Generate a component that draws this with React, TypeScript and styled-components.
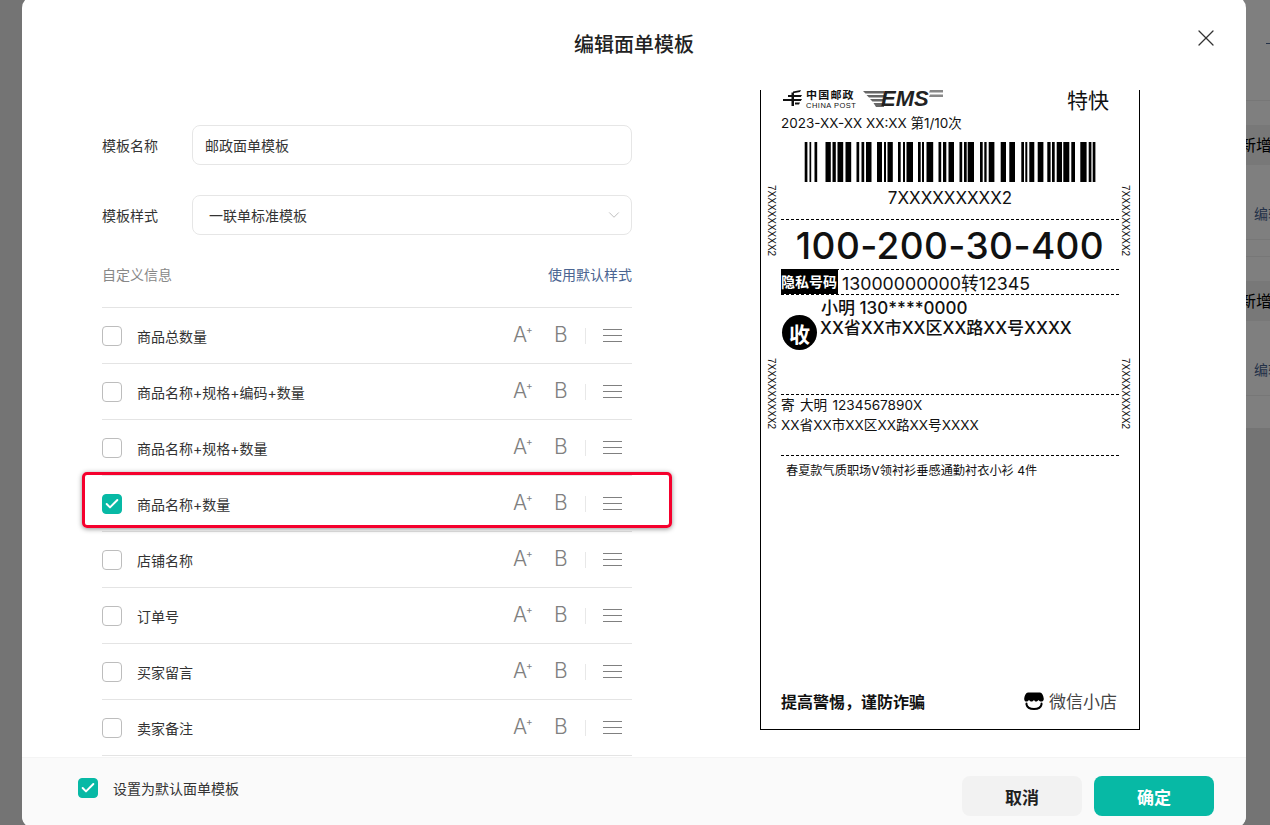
import React, { FC } from 'react';
import styled, { createGlobalStyle } from 'styled-components';
import { Check, ChevronDown, X } from 'lucide-react';

const FONT = '"Inter", "Noto Sans CJK SC", sans-serif';
const TEAL = '#07b9a5';
const DASH = '1px dashed #000';

const GlobalStyle = createGlobalStyle`
  html, body {
    margin: 0;
    height: 100%;
    overflow: hidden;
    font-family: ${FONT};
    color: #333;
  }
  #root { height: 100%; }
`;

/* page behind the dialog */
const Page = styled.div`
  position: relative;
  height: 825px;
  overflow: hidden;
  background: #e9e9e9;
  padding-left: 40px;
`;

const Panel = styled.div`
  height: 428px;
  background: #fff;
`;

const PanelTop = styled.div`
  height: 100px;
  border-bottom: 1px solid #eee;
  margin-bottom: 24px;
  display: flex;
  justify-content: flex-end;
`;

const PanelDash = styled.span`
  width: 4px;
  height: 1px;
  margin-top: 43px;
  background: #4a6491;
`;

const Band = styled.div`
  height: 40px;
  background: #f0f0f0;
  padding-left: 1200px;
  font-size: 16px;
  line-height: 40px;
  color: #000;
  white-space: nowrap;
`;

const EditRow = styled.div`
  height: 74px;
  padding-left: 1214px;
  border-bottom: 1px solid #eee;
  font-size: 14px;
  line-height: 98px;
  color: #4a6491;
  white-space: nowrap;
`;

const SectionGap = styled.div`
  height: 24px;
  margin-top: 16px;
  border-top: 1px solid #eee;
`;

const Mask = styled.div`
  position: absolute;
  inset: 0;
  background: rgba(0, 0, 0, 0.5);
`;

/* dialog */
const Modal = styled.div`
  position: absolute;
  left: 22px;
  top: -4px;
  width: 1224px;
  height: 832px;
  display: flex;
  flex-direction: column;
  background: #fff;
  border-radius: 12px;
  overflow: hidden;
`;

const Header = styled.div`
  height: 94px;
  flex: none;
  box-sizing: border-box;
  padding-top: 35px;
  text-align: center;
  font-size: 20px;
  line-height: 28px;
  font-weight: 500;
  color: #222;
`;

const CloseButton = styled.button`
  position: absolute;
  right: 26px;
  top: 28px;
  padding: 0;
  display: flex;
  border: 0;
  background: none;
  color: #333;
`;

const Body = styled.div`
  flex: 1;
  min-height: 0;
  display: flex;
  gap: 128px;
  padding-left: 80px;
  overflow: hidden;
`;

const FormColumn = styled.div`
  width: 530px;
  flex: none;
  padding-top: 35px;
`;

const Field = styled.div`
  display: flex;
  align-items: center;
  height: 40px;
  margin-bottom: 30px;
  font-size: 14px;
`;

const FieldLabel = styled.label`
  width: 90px;
  flex: none;
  color: #333;
`;

const TextInput = styled.input`
  flex: 1;
  height: 40px;
  box-sizing: border-box;
  padding: 0 12px;
  border: 1px solid #e6e6e6;
  border-radius: 8px;
  outline: none;
  font: 14px ${FONT};
  color: #333;
`;

const SelectBox = styled.div`
  flex: 1;
  height: 40px;
  box-sizing: border-box;
  padding: 0 8px 0 16px;
  display: flex;
  align-items: center;
  justify-content: space-between;
  border: 1px solid #e6e6e6;
  border-radius: 8px;
  color: #333;
`;

const CustomHead = styled.div`
  display: flex;
  justify-content: space-between;
  align-items: center;
  height: 20px;
  margin-top: 1px;
  padding-bottom: 22px;
  border-bottom: 1px solid #e4e4e4;
  font-size: 14px;
  line-height: 20px;
  color: #888;
`;

const DefaultLink = styled.a`
  color: #4a6491;
`;

const OptionRow = styled.div<{ $marked?: boolean }>`
  position: relative;
  height: 56px;
  box-sizing: border-box;
  display: flex;
  align-items: center;
  border-bottom: 1px solid #e4e4e4;
  font-size: 14px;

  ${(p) =>
    p.$marked &&
    `&::after {
      content: '';
      position: absolute;
      left: -20px;
      right: -40px;
      top: -4px;
      bottom: 3px;
      border: 3px solid #f5002d;
      border-radius: 5px;
      box-shadow: 0 1px 5px rgba(0, 0, 0, 0.45);
    }`}
`;

const Box = styled.span<{ $on?: boolean }>`
  width: 20px;
  height: 20px;
  flex: none;
  box-sizing: border-box;
  display: flex;
  align-items: center;
  justify-content: center;
  border-radius: 4px;
  border: 1px solid ${(p) => (p.$on ? TEAL : '#bdbdbd')};
  background: ${(p) => (p.$on ? TEAL : '#fff')};
  color: #fff;
`;

const OptionName = styled.span`
  flex: 1;
  margin-left: 15px;
  color: #333;
`;

const ToolGroup = styled.div`
  display: flex;
  align-items: center;
  width: 118px;
  height: 20px;
  color: #808080;
`;

const ToolGlyph = styled.span`
  position: relative;
  top: -1px;
  font-family: "Inter", sans-serif;
  font-size: 21px;
  font-weight: 300;
  line-height: 20px;
`;

const GrowGlyph = styled(ToolGlyph)`
  width: 41px;
  margin-left: -1px;
  margin-right: 1px;
`;

const PlusMark = styled.sup`
  position: absolute;
  left: 13px;
  top: -1px;
  font-size: 10px;
  font-weight: 400;
  line-height: 10px;
  vertical-align: baseline;
`;

const BoldGlyph = styled(ToolGlyph)`
  width: 30px;
  margin-left: -1px;
  margin-right: 1px;
`;

const ToolDivider = styled.i`
  width: 1px;
  height: 16px;
  background: #e8e8e8;
  margin-right: 17px;
`;

const Burger = styled.span`
  width: 19px;
  height: 13px;
  border-top: 1px solid #808080;
  border-bottom: 1px solid #808080;
  box-sizing: border-box;
  display: flex;
  align-items: center;

  &::before {
    content: '';
    flex: 1;
    height: 1px;
    background: #808080;
  }
`;

/* waybill preview */
const Waybill = styled.div`
  position: relative;
  width: 380px;
  height: 640px;
  flex: none;
  box-sizing: border-box;
  display: flex;
  flex-direction: column;
  padding: 0 20px 17px;
  border: 1px solid #000;
  border-top: 0;
  color: #111;
`;

const SideCode = styled.span<{ $side: 'left' | 'right'; $top: number }>`
  position: absolute;
  ${(p) => p.$side}: ${(p) => (p.$side === 'left' ? 5 : 8)}px;
  top: ${(p) => p.$top}px;
  writing-mode: vertical-rl;
  font-family: "Liberation Sans", sans-serif;
  font-size: 10px;
  line-height: 11px;
`;

const BillHead = styled.div`
  height: 23px;
  display: flex;
  align-items: flex-start;
  padding-left: 2px;
`;

const PostName = styled.div`
  margin-left: 3px;
  display: flex;
  flex-direction: column;
  width: 57px;
`;

const PostCn = styled.span`
  font-size: 11px;
  line-height: 11px;
  font-weight: 700;
  letter-spacing: 1.2px;
`;

const PostEn = styled.span`
  font-family: "Liberation Sans", sans-serif;
  font-size: 7.5px;
  line-height: 7px;
  letter-spacing: 0.5px;
  margin-top: 1px;
  white-space: nowrap;
`;

const EmsMark = styled.div`
  display: flex;
  align-items: flex-start;
  height: 18px;
`;

const EmsText = styled.span`
  font-family: "Liberation Sans", sans-serif;
  font-style: italic;
  font-weight: 700;
  font-size: 22px;
  line-height: 18px;
  margin-left: -3px;
  color: #222;
`;

const SpeedTag = styled.span`
  margin-left: auto;
  margin-right: 10px;
  font-size: 21px;
  line-height: 22px;
`;

const DateLine = styled.div`
  font-size: 13.5px;
  line-height: 20px;
  white-space: nowrap;
`;

const BarcodeWrap = styled.div`
  margin: 9px 0 0 23px;
  height: 40px;
  display: flex;
`;

const CodeLine = styled.div`
  margin-top: 6px;
  height: 32px;
  box-sizing: border-box;
  border-bottom: ${DASH};
  text-align: center;
  font-size: 17px;
  line-height: 20px;
`;

const TrackNo = styled.div`
  height: 50px;
  box-sizing: border-box;
  border-bottom: ${DASH};
  text-align: center;
  font-size: 37px;
  line-height: 52px;
  font-weight: 500;
  letter-spacing: 0.4px;
  white-space: nowrap;
`;

const PhoneRow = styled.div`
  height: 25px;
  box-sizing: border-box;
  display: flex;
  align-items: center;
  border-bottom: ${DASH};
  font-size: 17.75px;
  white-space: nowrap;
`;

const PrivacyTag = styled.span`
  width: 57px;
  height: 25px;
  margin: -1px 4px 0 0;
  background: #000;
  color: #fff;
  font-size: 14px;
  font-weight: 700;
  line-height: 26px;
  white-space: nowrap;
  overflow: hidden;
`;

const Receiver = styled.div`
  height: 100px;
  box-sizing: border-box;
  padding-top: 3px;
  border-bottom: ${DASH};
  display: flex;
`;

const ReceiverBadge = styled.span`
  width: 35px;
  height: 35px;
  margin: 17px 3px 0 1px;
  flex: none;
  display: flex;
  align-items: center;
  justify-content: center;
  border-radius: 50%;
  background: #000;
  color: #fff;
  font-size: 21px;
  font-weight: 700;
`;

const ReceiverText = styled.div`
  font-size: 17px;
  font-weight: 500;
  line-height: 20px;
  white-space: nowrap;
`;

const ReceiverName = styled.div`
  padding-left: 1px;
`;

const Sender = styled.div`
  height: 61px;
  box-sizing: border-box;
  border-bottom: ${DASH};
  font-size: 13.6px;
  line-height: 20px;
  word-spacing: 1.5px;
`;

const Goods = styled.div`
  padding: 5px 0 0 5px;
  font-size: 12.2px;
  line-height: 20px;
  white-space: nowrap;
`;

const BillFoot = styled.div`
  margin-top: auto;
  height: 20px;
  display: flex;
  align-items: center;
  justify-content: space-between;
`;

const Warning = styled.span`
  font-size: 16px;
  font-weight: 700;
  line-height: 20px;
  white-space: nowrap;
`;

const ShopMark = styled.span`
  display: flex;
  align-items: center;
  gap: 5px;
  margin-right: 2px;
  font-size: 17px;
  line-height: 20px;
  color: #444;
`;

/* dialog footer */
const Footer = styled.div`
  height: 71px;
  flex: none;
  box-sizing: border-box;
  padding: 18px 32px 0 56px;
  display: flex;
  align-items: flex-start;
  background: #fafafa;
  border-top: 1px solid #f4f4f4;
`;

const DefaultCheck = styled.label`
  display: flex;
  align-items: center;
  gap: 15px;
  margin-top: 2px;
  font-size: 14px;
  color: #333;
  flex: 1;
`;

const ActionButton = styled.button<{ $primary?: boolean }>`
  width: 120px;
  height: 40px;
  margin-left: 12px;
  border: 0;
  border-radius: 8px;
  background: ${(p) => (p.$primary ? TEAL : '#f2f2f2')};
  color: ${(p) => (p.$primary ? '#fff' : '#222')};
  font: 700 17px ${FONT};
`;

const OPTIONS = [
  '商品总数量',
  '商品名称+规格+编码+数量',
  '商品名称+规格+数量',
  '商品名称+数量',
  '店铺名称',
  '订单号',
  '买家留言',
  '卖家备注',
];

// x, width pairs measured from the left edge of the barcode
const BARS: [number, number][] = [
  [0.7, 2.7], [5.5, 1.7], [10.5, 2.7], [21.5, 5.3], [28.5, 3.3], [33.5, 5.7], [41.5, 5.7],
  [52.5, 2.7], [57.5, 2.7], [62, 5.5], [73, 5], [80, 2], [83.5, 5.3], [94, 2.7], [99, 2],
  [102.5, 6.5], [114, 2.7], [118, 2], [122.5, 6.7], [134.5, 2.7], [139, 3.3], [144.5, 5.5],
  [155.5, 2.7], [160, 2.7], [163.7, 6.3], [176, 2.7], [180.3, 2.3], [184.7, 5.7], [196.7, 5.3],
  [205.3, 5.7], [217.3, 2.7], [221.3, 2], [225.3, 5], [233.7, 5.7], [243.3, 3.3], [248, 2.7],
  [252.7, 5.3], [259.3, 6], [267.3, 3.7], [276.3, 6.3], [284.7, 2.7], [288.7, 2.7],
];

const Barcode: FC = () => (
  <svg width="292" height="40" viewBox="0 0 292 40">
    {BARS.map(([x, w]) => (
      <rect key={x} x={x} y="0" width={w} height="40" fill="#000" />
    ))}
  </svg>
);

const PostEmblem: FC = () => (
  <svg width="20" height="17" viewBox="0 0 20 17" fill="#111">
    <path d="M10 1.5l8-1.500-1 2-7 1.300zM5 5h14l-1.200 2H5zM0 9h19l-1.200 2H11v5H8.500v-5H0zM8.500 2.500H11V9H8.500zM12 12.500h5l-1 2h-4z" />
  </svg>
);

const EmsWing: FC = () => (
  <svg width="21" height="18" viewBox="0 0 21 18" fill="#666">
    <path d="M0 1h21v2.500H2.500zM3.500 5H21v2.500H6zM7 9h14v2.500H9.500zM10.500 13H21v4h-8z" />
  </svg>
);

const EmsLines: FC = () => (
  <svg width="14" height="8" viewBox="0 0 14 8" fill="#888">
    <path d="M1 0h13v2.500H0zM1 4.500h13V7H0z" />
  </svg>
);

const ShopIcon: FC = () => (
  <svg width="20" height="20" viewBox="0 0 20 20">
    <path
      d="M4 0.500h12c2 0 3.500 3 3.800 6.500 0 1.600-1.300 2.600-2.700 2.600-1.200 0-2.100-.6-2.600-1.500-.5.900-1.400 1.500-2.500 1.500S10.500 9 10 8.100C9.500 9 8.500 9.600 7.500 9.600S5.500 9 5 8.100C4.400 9 3.600 9.600 2.500 9.600 1.200 9.600.2 8.600.2 7 .5 3.500 2 .5 4 .5z"
      fill="#000"
    />
    <path d="M2.500 11.500v1c1.200 6 13.800 6 15 0v-1" fill="none" stroke="#000" strokeWidth="2" strokeLinecap="round" />
  </svg>
);

const App: FC = () => (
  <>
    <GlobalStyle />
    <Page>
      <Panel>
        <PanelTop>
          <PanelDash />
        </PanelTop>
        <Band>新增</Band>
        <EditRow>编辑</EditRow>
        <SectionGap />
        <Band>新增</Band>
        <EditRow>编辑</EditRow>
      </Panel>
      <Mask />
      <Modal>
        <Header>
          编辑面单模板
          <CloseButton type="button">
            <X size={28} strokeWidth={1.1} />
          </CloseButton>
        </Header>
        <Body>
          <FormColumn>
            <Field>
              <FieldLabel>模板名称</FieldLabel>
              <TextInput readOnly value="邮政面单模板" />
            </Field>
            <Field>
              <FieldLabel>模板样式</FieldLabel>
              <SelectBox>
                一联单标准模板
                <ChevronDown size={18} strokeWidth={1} color="#aaa" />
              </SelectBox>
            </Field>
            <CustomHead>
              自定义信息
              <DefaultLink>使用默认样式</DefaultLink>
            </CustomHead>
            {OPTIONS.map((name) => {
              const on = name === '商品名称+数量';
              return (
                <OptionRow key={name} $marked={on}>
                  <Box $on={on}>{on && <Check size={16} strokeWidth={3} />}</Box>
                  <OptionName>{name}</OptionName>
                  <ToolGroup>
                    <GrowGlyph>
                      A<PlusMark>+</PlusMark>
                    </GrowGlyph>
                    <BoldGlyph>B</BoldGlyph>
                    <ToolDivider />
                    <Burger />
                  </ToolGroup>
                </OptionRow>
              );
            })}
          </FormColumn>
          <Waybill>
            <SideCode $side="left" $top={95}>7XXXXXXXXX2</SideCode>
            <SideCode $side="right" $top={95}>7XXXXXXXXX2</SideCode>
            <SideCode $side="left" $top={268}>7XXXXXXXXX2</SideCode>
            <SideCode $side="right" $top={268}>7XXXXXXXXX2</SideCode>
            <BillHead>
              <PostEmblem />
              <PostName>
                <PostCn>中国邮政</PostCn>
                <PostEn>CHINA POST</PostEn>
              </PostName>
              <EmsMark>
                <EmsWing />
                <EmsText>EMS</EmsText>
                <EmsLines />
              </EmsMark>
              <SpeedTag>特快</SpeedTag>
            </BillHead>
            <DateLine>2023-XX-XX XX:XX 第1/10次</DateLine>
            <BarcodeWrap>
              <Barcode />
            </BarcodeWrap>
            <CodeLine>7XXXXXXXXX2</CodeLine>
            <TrackNo>100-200-30-400</TrackNo>
            <PhoneRow>
              <PrivacyTag>隐私号码</PrivacyTag>
              13000000000转12345
            </PhoneRow>
            <Receiver>
              <ReceiverBadge>收</ReceiverBadge>
              <ReceiverText>
                <ReceiverName>小明 130****0000</ReceiverName>
                XX省XX市XX区XX路XX号XXXX
              </ReceiverText>
            </Receiver>
            <Sender>
              寄 大明 1234567890X
              <br />
              XX省XX市XX区XX路XX号XXXX
            </Sender>
            <Goods>春夏款气质职场V领衬衫垂感通勤衬衣小衫 4件</Goods>
            <BillFoot>
              <Warning>提高警惕，谨防诈骗</Warning>
              <ShopMark>
                <ShopIcon />
                微信小店
              </ShopMark>
            </BillFoot>
          </Waybill>
        </Body>
        <Footer>
          <DefaultCheck>
            <Box $on>
              <Check size={16} strokeWidth={3} />
            </Box>
            设置为默认面单模板
          </DefaultCheck>
          <ActionButton type="button">取消</ActionButton>
          <ActionButton type="button" $primary>确定</ActionButton>
        </Footer>
      </Modal>
    </Page>
  </>
);

export default App;
